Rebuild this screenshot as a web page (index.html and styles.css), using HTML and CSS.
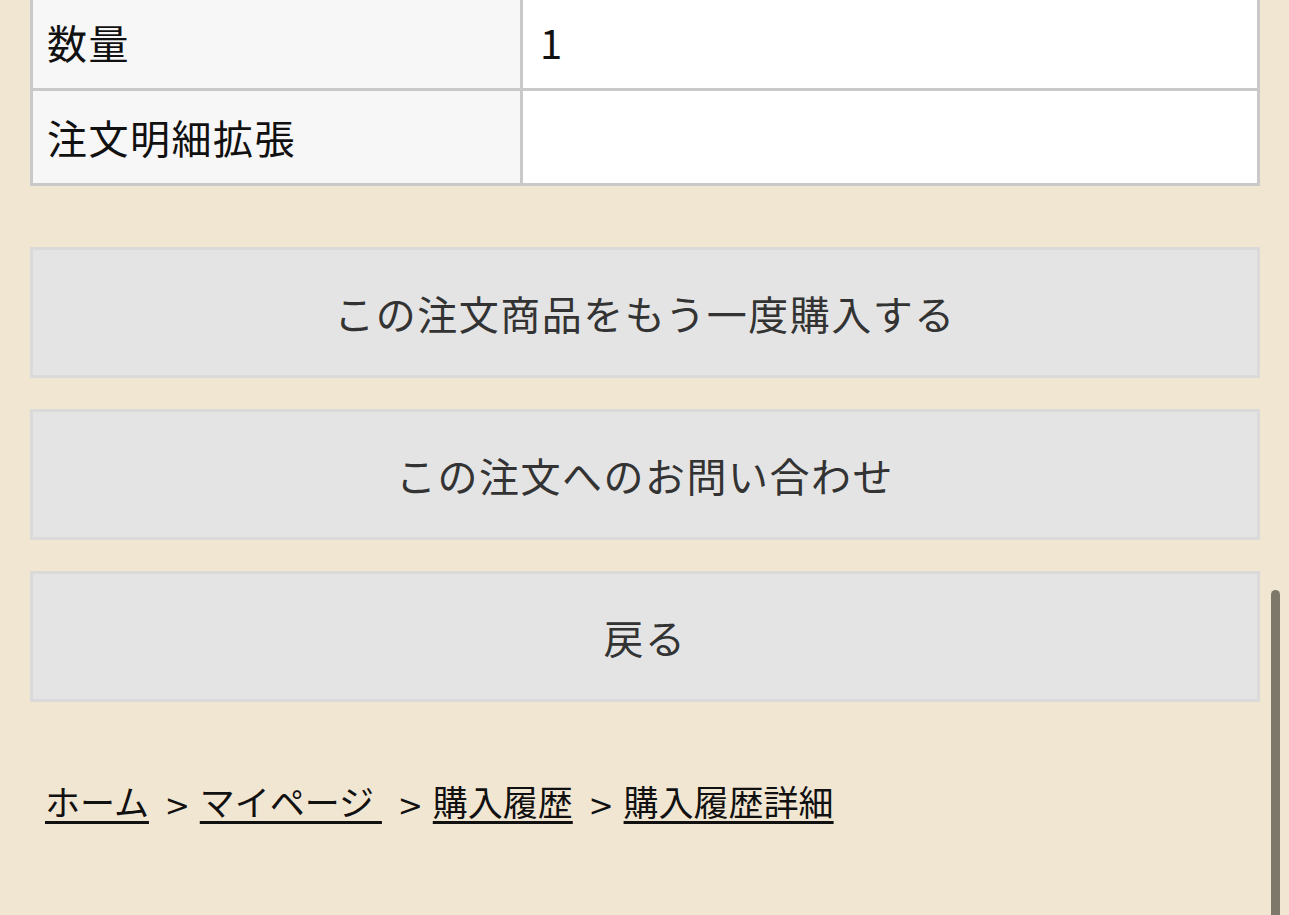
FILE: index.html
```html
<!DOCTYPE html>
<html lang="ja">
  <head>
    <meta charset="UTF-8" />
    <meta name="viewport" content="width=device-width, initial-scale=1.0">
    <title>購入履歴詳細</title>
    <link rel="stylesheet" href="styles.css">
  </head>
  <body>
    <div class="page">
      <table class="detail-table">
        <tbody>
          <tr>
            <th>数量</th>
            <td>1</td>
          </tr>
          <tr>
            <th>注文明細拡張</th>
            <td></td>
          </tr>
        </tbody>
      </table>

      <div class="actions">
        <button class="btn">この注文商品をもう一度購入する</button>
        <button class="btn">この注文へのお問い合わせ</button>
        <button class="btn">戻る</button>
      </div>

      <nav class="breadcrumb">
        <a href="#">ホーム</a>
        <span class="sep">&gt;</span>
        <a href="#">マイページ&nbsp;</a>
        <span class="sep">&gt;</span>
        <a href="#">購入履歴</a>
        <span class="sep">&gt;</span>
        <a href="#">購入履歴詳細</a>
      </nav>
    </div>

    <div class="scroll-indicator"></div>
  </body>
</html>
```

FILE: styles.css
```css
body {
  margin: 0;
  background: #f1e6d1;
  font-family: 'Noto Sans CJK JP', 'Noto Sans', sans-serif;
  color: #111;
}

.page {
  margin-top: -7px;
  padding: 0 29px 0 30px;
}

/* order detail table */
.detail-table {
  width: 100%;
  border-collapse: collapse;
  border: 3px solid #c9c9c9;
}

.detail-table th,
.detail-table td {
  border: 3px solid #c9c9c9;
  height: 95px;
  padding: 0 14px;
  font-size: 40px;
  font-weight: normal;
  letter-spacing: 1.5px;
  text-align: left;
  vertical-align: middle;
  box-sizing: border-box;
}

.detail-table th {
  width: 490px;
  background: #f7f7f7;
}

.detail-table td {
  background: #fff;
  padding-left: 17px;
}

/* buttons */
.actions {
  margin-top: 61px;
  display: flex;
  flex-direction: column;
  gap: 31px;
}

.btn {
  display: block;
  width: 100%;
  height: 131px;
  padding: 0;
  background: #e4e4e4;
  border: 3px solid #dadada;
  border-radius: 0;
  color: #333;
  font-family: inherit;
  font-size: 40px;
  letter-spacing: 1.5px;
  cursor: pointer;
}

/* breadcrumb */
.breadcrumb {
  margin-top: 73px;
  padding-left: 15px;
  font-size: 35px;
  line-height: 52px;
}

.breadcrumb a {
  color: #111;
  text-decoration: underline;
  text-decoration-thickness: 3px;
  text-underline-offset: 5px;
}

.breadcrumb .sep {
  margin: 0 2px 0 8px;
  font-family: 'DejaVu Sans', sans-serif;
  font-size: 30px;
}

/* iOS style overlay scroll indicator */
.scroll-indicator {
  position: fixed;
  right: 9px;
  top: 590px;
  bottom: -10px;
  width: 9px;
  border-radius: 5px;
  background: #7d7869;
}
```
